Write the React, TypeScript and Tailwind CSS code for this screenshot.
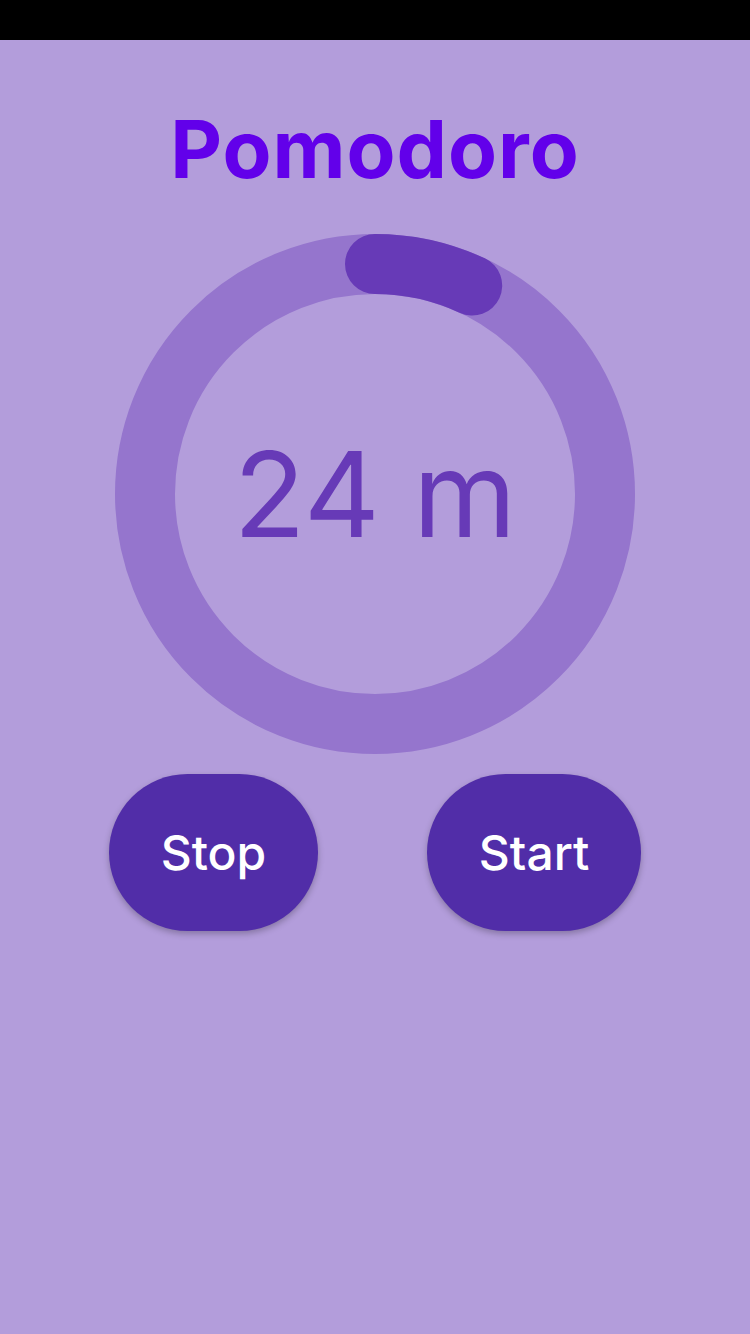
import React from "react";

const R = 230;
const CX = 260;
const CY = 260;
const ANGLE = 25; // degrees of progress drawn from 12 o'clock

function arcPath(deg: number) {
  const rad = (deg * Math.PI) / 180;
  const x = CX + R * Math.sin(rad);
  const y = CY - R * Math.cos(rad);
  return `M ${CX} ${CY - R} A ${R} ${R} 0 ${deg > 180 ? 1 : 0} 1 ${x} ${y}`;
}

export default function App() {
  return (
    <main className="min-h-[1334px] w-[750px] bg-[#B39DDB] flex flex-col items-center font-['Inter',sans-serif]">
      {/* status bar */}
      <div className="w-full h-[40px] bg-black" />

      {/* TITLE */}
      <h1 className="mt-[69px] text-[80px] leading-none font-bold text-[#6200EA] tracking-[1px]">
        Pomodoro
      </h1>

      {/* RING */}
      <div className="relative mt-[45px] w-[520px] h-[520px] flex items-center justify-center">
        <svg className="absolute inset-0" width="520" height="520" viewBox="0 0 520 520">
          <circle cx={CX} cy={CY} r={R} fill="none" stroke="#9575CD" strokeWidth="60" />
          <path d={arcPath(ANGLE)} fill="none" stroke="#673AB7" strokeWidth="60" strokeLinecap="round" />
        </svg>
        <span className="relative text-[118px] leading-none text-[#673AB7]">
          24 m
        </span>
      </div>

      {/* BUTTONS */}
      <div className="mt-[20px] w-full flex justify-evenly">
        <button className="h-[157px] px-[52px] rounded-full bg-[#512DA8] text-white text-[48px] font-medium shadow-[0_3px_6px_rgba(0,0,0,0.25)]">
          Stop
        </button>
        <button className="h-[157px] px-[52px] rounded-full bg-[#512DA8] text-white text-[48px] font-medium shadow-[0_3px_6px_rgba(0,0,0,0.25)]">
          Start
        </button>
      </div>
    </main>
  );
}
